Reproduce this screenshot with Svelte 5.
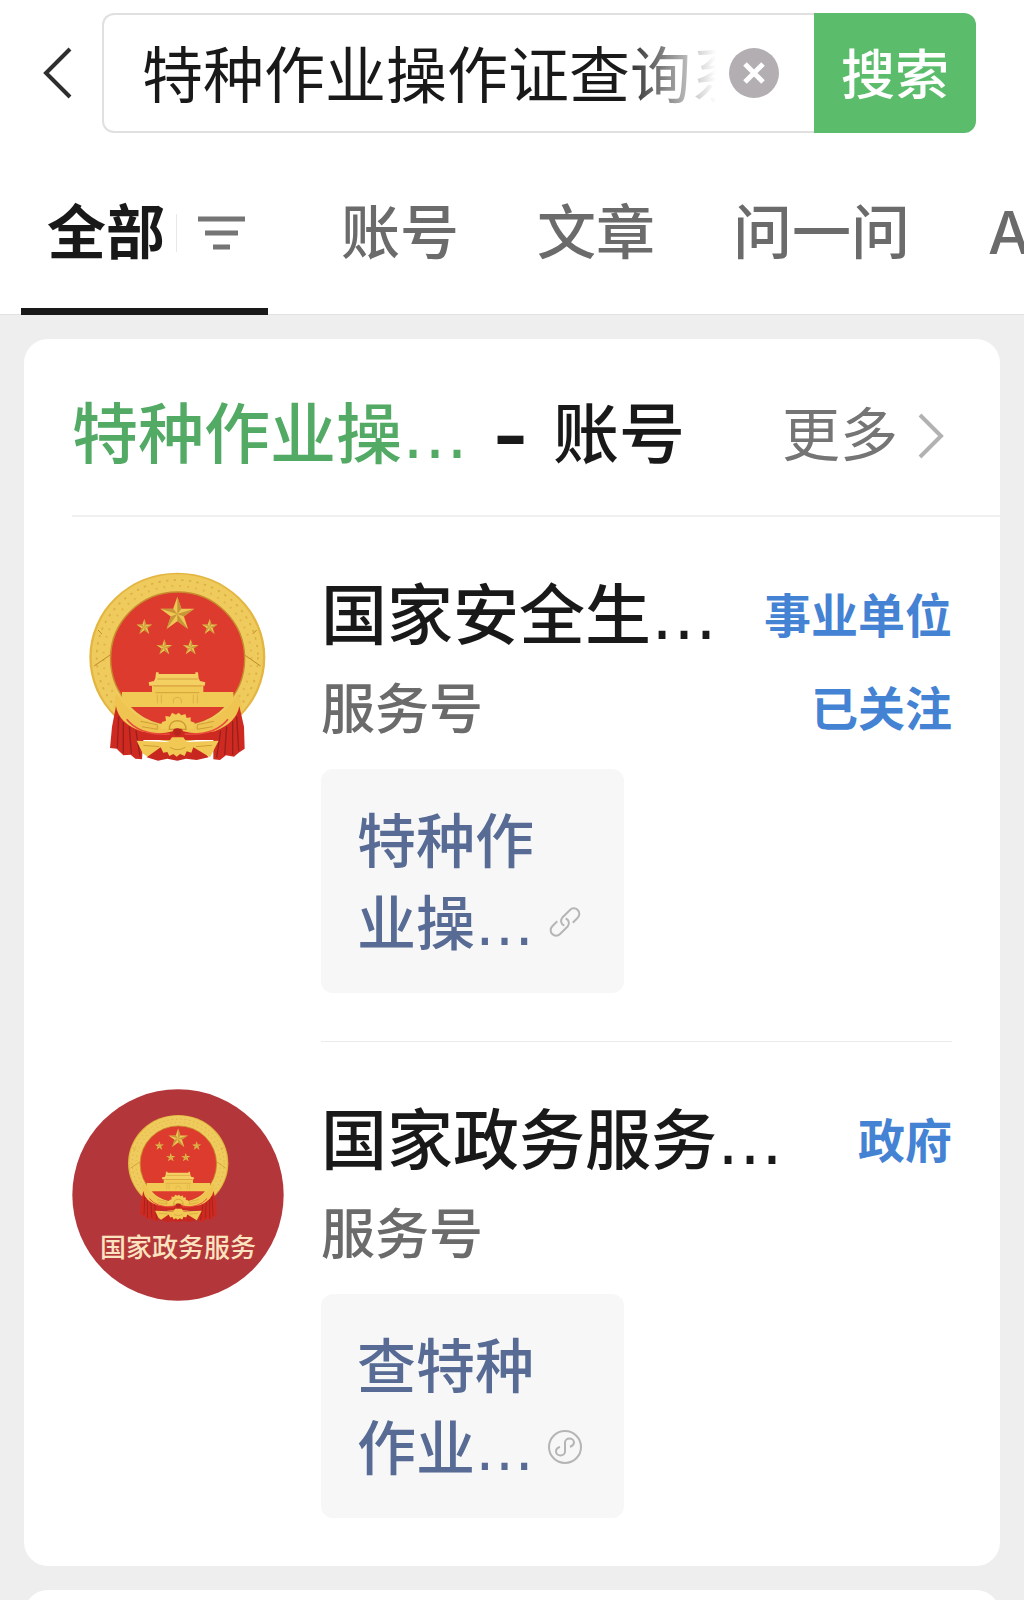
<script>
  let query = $state("特种作业操作证查询系统");
  let activeTab = $state("全部");

  const tabs = ["全部", "账号", "文章", "问一问", "AI"];

  const accounts = [
    {
      name: "国家安全生…",
      tag: "事业单位",
      type: "服务号",
      followed: true,
      avatar: "emblem",
      service: ["特种作", "业操…"],
      icon: "link",
    },
    {
      name: "国家政务服务…",
      tag: "政府",
      type: "服务号",
      followed: false,
      avatar: "badge",
      service: ["查特种", "作业…"],
      icon: "mini",
    },
  ];

  const star = "0,-50 12,-15 49,-15 19,7 31,43 0,21 -31,43 -19,7 -49,-15 -12,-15";
  // shaded halves of the star's arms
  const starShade =
    "M0-50 12-15 0 0ZM49-15 19 7 0 0ZM31 43 0 21 0 0ZM-31 43-19 7 0 0ZM-49-15-12-15 0 0Z";

  const stars = [
    { x: 322, y: 162, s: 1.04 },
    { x: 223, y: 201, s: 0.48 },
    { x: 419, y: 201, s: 0.48 },
    { x: 283, y: 262, s: 0.48 },
    { x: 362, y: 262, s: 0.48 },
  ];
</script>

{#snippet emblem()}
  <ellipse cx="322" cy="292" rx="264" ry="254" fill="#e3b541" />
  <ellipse cx="322" cy="292" rx="230" ry="222" fill="none" stroke="#efca5c" stroke-width="54" />
  <ellipse cx="322" cy="292" rx="222" ry="214" fill="none" stroke="#d3a232" stroke-width="6" stroke-dasharray="5 19" opacity="0.5" />
  <ellipse cx="322" cy="292" rx="242" ry="232" fill="none" stroke="#c6942c" stroke-width="5" stroke-dasharray="7 16" opacity="0.5" />
  <path d="M72 318 122 284M572 318 522 284M84 210 96 222M560 210 548 222" stroke="#bd8c2b" stroke-width="3" />
  <ellipse cx="323" cy="296" rx="201" ry="200" fill="#dd3b2e" stroke="#c78b2d" stroke-width="4" />
  {#each stars as p}
    <g transform="translate({p.x} {p.y}) scale({p.s})">
      <polygon points={star} fill="#edc653" />
      <path d={starShade} fill="#b8862f" opacity="0.75" />
    </g>
  {/each}
  <path d="M258 337h8v5h110v-5h8l2 18 4 8 16 4-2 10H238l-2-10 16-4 4-8Z" fill="#f4cf62" />
  <path d="M246 377H400V396H490V441H156V396H246Z" fill="#f1c955" />
  <path d="M250 378H396M262 357H384M256 398H388" stroke="#d2a23a" stroke-width="3" />
  <path d="M262 404v26M274 404v26M370 404v26M382 404v26M310 430v-12q12-12 24 0v12" fill="none" stroke="#dcb047" stroke-width="3" />
  <path d="M140 402Q184 476 270 500H374Q460 476 504 402L516 440 486 500Q410 530 322 528 236 530 160 500L130 440Z" fill="#efc450" />
  <path d="M184 441H462Q432 476 376 490H268Q214 476 184 441Z" fill="#dd3b2e" />
  <path d="M212 484 262 494V508L216 500M432 484 382 494V508L428 500" fill="none" stroke="#cf9e36" stroke-width="3" />
  <path d="M272 506 276 486 288 482 286 468 300 470 306 458 318 464 326 458 334 466 346 462 350 474 362 472 362 484 374 488 374 506Z" fill="#f2ca56" />
  <path d="M298 508Q298 484 322 482 348 484 348 508Z" fill="none" stroke="#cc9932" stroke-width="4" />
  <path d="M138 438Q146 490 214 514 270 526 308 514L312 506H334L340 514Q380 526 434 514 500 488 508 438L522 500 524 566 506 578 492 590 468 586 450 600 430 598V540H220L216 598 196 596 182 584 160 586 140 566 120 564 126 500Z" fill="#cf2a22" />
  <path d="M146 470 142 564M160 486 160 580M178 500 184 582M198 512 210 590M500 470 506 572M488 484 488 584M470 500 464 584M452 512 440 592" stroke="#98201a" stroke-width="4" fill="none" />
  <path d="M170 478Q210 528 300 522M474 478Q434 528 344 522" stroke="#ea4b3c" stroke-width="5" fill="none" />
  <path d="M230 592 258 560 300 546H344L390 560 416 592 380 600 348 596 322 602 292 596 264 602Z" fill="#c8271f" />
  <path d="M200 542 296 546 306 532H340L350 546 446 542 420 592 370 562 364 578 350 574 344 588 330 582 320 590 310 582 298 588 292 576 280 578 272 562 232 590 218 580Z" fill="#f1c854" />
  <path d="M220 556 268 560M426 556 378 560M300 562Q322 576 346 562" stroke="#cf9e36" stroke-width="3" fill="none" />
  <circle cx="322" cy="516" r="11" fill="#b5261c" />
{/snippet}

<div class="page">
  <header>
    <div class="search">
      <button class="back" aria-label="返回">
        <svg viewBox="0 0 30 52" width="30" height="52">
          <path d="M27 2 3 26 27 50" fill="none" stroke="#2e2e2e" stroke-width="4" />
        </svg>
      </button>
      <div class="box">
        <input type="text" aria-label="搜索内容" bind:value={query} />
        <button class="clear" aria-label="清除" onclick={() => (query = "")}>
          <svg viewBox="0 0 52 52" width="52" height="52">
            <circle cx="26" cy="26" r="25" fill="#b2aeb2" />
            <path d="M17 17 35 35M35 17 17 35" stroke="#fff" stroke-width="5" />
          </svg>
        </button>
      </div>
      <button class="submit">搜索</button>
    </div>

    <nav>
      {#each tabs as tab, i}
        <button class="tab" class:first={i === 0} class:active={tab === activeTab} onclick={() => (activeTab = tab)}>
          {tab}
          {#if i === 0}
            <span class="split"></span>
            <svg viewBox="0 0 48 36" width="48" height="36">
              <path d="M0 4H47M7 18H40M15 32H32" stroke="#757575" stroke-width="5" />
            </svg>
          {/if}
        </button>
      {/each}
    </nav>
  </header>

  <main>
    <section class="card">
      <div class="card-head">
        <h2><em>特种作业操…</em><span class="dash">–</span>账号</h2>
        <a class="more" href="#more">
          更多
          <svg viewBox="0 0 26 46" width="26" height="46">
            <path d="M2 2 23 23 2 44" fill="none" stroke="#b2b2b2" stroke-width="4" />
          </svg>
        </a>
      </div>

      {#each accounts as account}
        <article>
          <div class="avatar">
            {#if account.avatar === "emblem"}
              <svg viewBox="6 15 636 636">{@render emblem()}</svg>
            {:else}
              <svg viewBox="37 30 636 636">
                <circle cx="355" cy="348" r="317" fill="#b3373a" />
                <g transform="translate(172 86) scale(0.57)">{@render emblem()}</g>
                <text x="355" y="534" text-anchor="middle">国家政务服务</text>
              </svg>
            {/if}
          </div>
          <div class="info">
            <div class="line">
              <h3>{account.name}</h3>
              <span class="tag">{account.tag}</span>
            </div>
            <div class="line sub">
              <span>{account.type}</span>
              {#if account.followed}
                <span class="tag">已关注</span>
              {/if}
            </div>
            <a class="service" href="#service">
              <span>{account.service[0]}<br />{account.service[1]}</span>
              {#if account.icon === "link"}
                <svg viewBox="-17 -17 34 34" width="34" height="34">
                  <g fill="none" stroke="#b5b5b5" stroke-width="2" transform="rotate(-45)">
                    <path d="M-5-6H-12a5 5 0 0 0 0 11H-1a5 5 0 0 0 4-7" />
                    <path d="M5 6H12a5 5 0 0 0 0-11H1a5 5 0 0 0-4 7" />
                  </g>
                </svg>
              {:else}
                <svg viewBox="0 0 34 34" width="34" height="34">
                  <g fill="none" stroke="#b5b5b5" stroke-width="2">
                    <circle cx="17" cy="17" r="16" />
                    <path d="M22 17c2-1 4-2 4-4.500a4.500 4 0 0 0-9 0v9a4.500 4 0 0 1-9 0c0-2.500 2-4 4-4.500" />
                  </g>
                </svg>
              {/if}
            </a>
          </div>
        </article>
      {/each}
    </section>

    <section class="card next"></section>
  </main>
</div>

<style>
  :global(body) {
    margin: 0;
    background: #eee;
  }

  .page {
    overflow: hidden;
    color: #191919;
    font-family: "Liberation Sans", "Noto Sans CJK SC", sans-serif;
  }

  button,
  input {
    padding: 0;
    border: 0;
    background: none;
    color: inherit;
    font-family: inherit;
  }

  button {
    cursor: pointer;
  }

  a {
    text-decoration: none;
  }

  svg {
    display: block;
    flex: none;
  }

  header {
    padding-top: 13px;
    background: #fff;
    box-shadow: inset 0 -1px #e2e2e2;
  }

  .search {
    display: flex;
    height: 120px;
    padding-right: 48px;
  }

  .back {
    display: flex;
    align-items: center;
    width: 102px;
    padding-left: 43px;
  }

  .box {
    display: flex;
    flex: 1;
    align-items: center;
    gap: 12px;
    min-width: 0;
    box-sizing: border-box;
    padding: 0 34px 0 38px;
    border: 2px solid #e0e0e0;
    border-right: 0;
    border-radius: 12px 0 0 12px;
  }

  .box input {
    flex: 1;
    min-width: 0;
    height: 88px;
    padding-bottom: 4px;
    outline: 0;
    font-size: 61px;
    mask-image: linear-gradient(to right, #000 calc(100% - 96px), transparent);
  }

  .submit {
    width: 162px;
    padding-bottom: 4px;
    border-radius: 0 12px 12px 0;
    background: #5bbd6b;
    color: #fff;
    font-size: 54px;
    font-weight: 500;
  }

  nav {
    display: flex;
    height: 163px;
    margin-top: 19px;
    padding-left: 21px;
  }

  .tab {
    display: flex;
    flex: none;
    align-items: center;
    margin-right: 78px;
    padding-bottom: 2px;
    color: #6b6b6b;
    font-family: "Inter", "Noto Sans CJK SC", sans-serif;
    font-size: 59px;
    font-weight: 500;
    line-height: 82px;
    white-space: nowrap;
  }

  .tab.first {
    margin-right: 73px;
    padding: 0 22px 2px 26px;
  }

  .tab.active {
    box-shadow: inset 0 -7px #191919;
    color: #191919;
    font-weight: 700;
  }

  .split {
    width: 1px;
    height: 38px;
    margin: 0 21px 0 11px;
    background: #e8e8e8;
  }

  main {
    display: flex;
    flex-direction: column;
    gap: 24px;
    padding: 24px 24px 0;
  }

  .card {
    border-radius: 24px;
    background: #fff;
  }

  .card.next {
    min-height: 48px;
  }

  .card-head {
    display: flex;
    align-items: center;
    justify-content: space-between;
    height: 158px;
    margin-left: 48px;
    padding: 18px 56px 0 0;
    border-bottom: 2px solid #f0f0f0;
  }

  h2,
  h3 {
    margin: 0;
    font-family: "DejaVu Sans", "Noto Sans CJK SC", sans-serif;
    font-size: 66px;
    font-weight: 500;
    white-space: nowrap;
  }

  h2 {
    line-height: 96px;
  }

  h2 em {
    color: #52aa64;
    font-style: normal;
  }

  .dash {
    margin: 0 26px;
    font-weight: 700;
  }

  .more {
    display: flex;
    align-items: center;
    gap: 20px;
    color: #757575;
    font-size: 58px;
    line-height: 90px;
  }

  article {
    display: flex;
    gap: 37px;
    padding-left: 48px;
  }

  .avatar {
    flex: none;
    width: 212px;
    padding-top: 48px;
  }

  .avatar text {
    fill: #fbe3c0;
    font-size: 78px;
    font-weight: 500;
  }

  .info {
    flex: 1;
    min-width: 0;
    margin-right: 48px;
    padding: 52px 0 48px;
  }

  article + article .info {
    border-top: 1px solid #ebebeb;
  }

  .line {
    display: flex;
    justify-content: space-between;
    line-height: 96px;
  }

  .line.sub {
    color: #6b6b6b;
    font-size: 54px;
    font-weight: 500;
    line-height: 90px;
  }

  .tag {
    color: #4482d3;
    font-size: 47px;
    font-weight: 700;
  }

  .service {
    display: inline-flex;
    align-items: flex-end;
    gap: 14px;
    margin-top: 14px;
    padding: 33px 42px 27px 36px;
    border-radius: 12px;
    background: #f7f7f7;
    color: #576b95;
    font-family: "DejaVu Sans", "Noto Sans CJK SC", sans-serif;
    font-size: 59px;
    font-weight: 500;
    line-height: 82px;
    vertical-align: top;
  }

  .service svg {
    margin-bottom: 27px;
  }
</style>
